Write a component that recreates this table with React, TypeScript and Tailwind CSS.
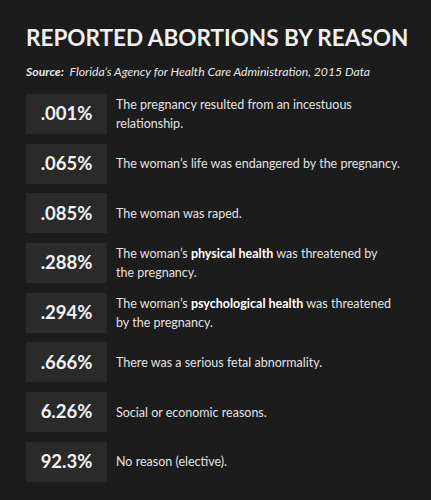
const rows: { pct: string; text: React.ReactNode }[] = [
  { pct: ".001%", text: "The pregnancy resulted from an incestuous relationship." },
  { pct: ".065%", text: "The woman’s life was endangered by the pregnancy." },
  { pct: ".085%", text: "The woman was raped." },
  {
    pct: ".288%",
    text: (
      <>
        The woman’s <b className="font-bold text-white">physical health</b> was threatened by
        <br />
        the pregnancy.
      </>
    ),
  },
  {
    pct: ".294%",
    text: (
      <>
        The woman’s <b className="font-bold text-white">psychological health</b> was threatened by the pregnancy.
      </>
    ),
  },
  { pct: ".666%", text: "There was a serious fetal abnormality." },
  { pct: "6.26%", text: "Social or economic reasons." },
  { pct: "92.3%", text: "No reason (elective)." },
];

export default function App() {
  return (
    <div className="w-[431px] h-[500px] bg-[#1c1c1c] text-[#e2e2e2] font-['Lato',sans-serif] px-[26px] pt-[24px] overflow-hidden">
      <h1 className="text-[22.5px] leading-[28px] font-bold text-[#f0f0f0] whitespace-nowrap">
        REPORTED ABORTIONS BY REASON
      </h1>
      <p className="mt-[12px] text-[12.2px] leading-[16px] italic text-[#e6e6e6]">
        <b className="font-bold">Source:</b>&nbsp; Florida’s Agency for Health Care Administration, 2015 Data
      </p>
      <div className="mt-[14px] flex flex-col gap-[9.7px]">
        {rows.map((r) => (
          <div key={r.pct} className="flex items-center gap-[9px]">
            <div className="w-[81px] h-[40px] shrink-0 bg-[#2a2a2a] flex items-center justify-center text-[18.5px] font-bold text-[#f2f2f2]">
              {r.pct}
            </div>
            <div className="w-[292px] text-[12.5px] leading-[19px]">{r.text}</div>
          </div>
        ))}
      </div>
    </div>
  );
}
